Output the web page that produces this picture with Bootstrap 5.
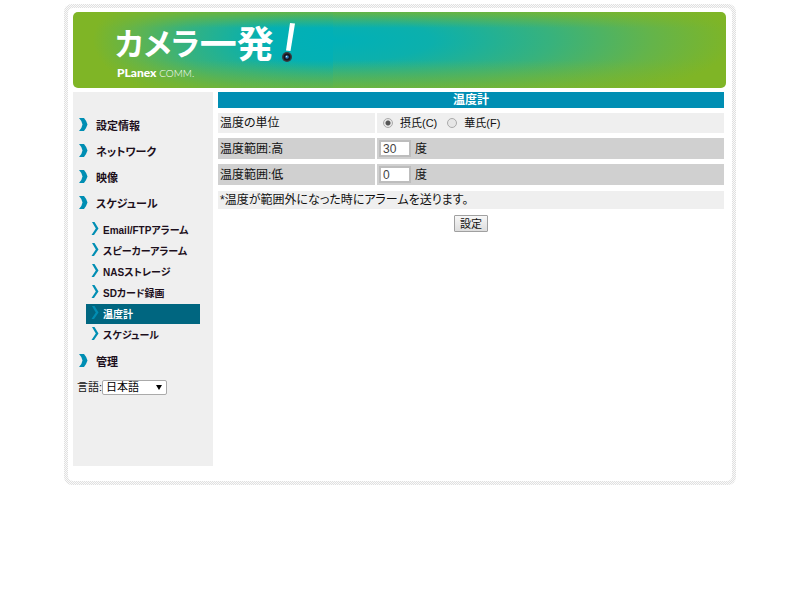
<!DOCTYPE html>
<html lang="ja">
<head>
<meta charset="utf-8">
<meta name="viewport" content="width=device-width, initial-scale=1">
<title>温度計</title>
<link rel="stylesheet" href="https://cdn.jsdelivr.net/npm/bootstrap@5.3.0/dist/css/bootstrap.min.css">
<style>
  body { font: 12px/16px "Liberation Sans", "Noto Sans CJK JP", sans-serif; font-feature-settings: "palt"; color: #111; background: #fff; }
  .frame { max-width: 672px; padding: 4px; border-radius: 8px; background: repeating-conic-gradient(#e0e0e0 0 25%, #fafafa 0 50%) 0 0 / 2px 2px; }
  .frame-inner { padding: 4px 6px 15px 5px; border-radius: 5px; background: #fff; }
  .banner { height: 76px; border-radius: 5px; color: #fff; padding: 5px 0 0 42px;
    background:
      linear-gradient(#7fb526bb 0, #7fb52600 16px, #7fb52600 48px, #7fb526aa 100%),
      radial-gradient(ellipse 240px 84px at 100% 28px, #00b0b8 0, #04b0b3 30%, #38b27c 64%, #64b44a 84%, #7fb526 100%) left / 260px 100% no-repeat,
      radial-gradient(ellipse 400px 84px at 0 28px, #00b0b8 0, #0cb0ac 25%, #38b27c 55%, #64b44a 80%, #7fb526 100%) 260px 0 / 100% 100% no-repeat; }
  .logo { font-family: "Noto Sans CJK JP", sans-serif; font-size: 37px; line-height: 50px; height: 50px; font-weight: 700; }
  .logo-kana { font-size: 31px; }
  .bang { width: 14px; height: 42px; margin: 4px 0 0 8px; }
  .maker { font: 300 10px/12px "Lato", sans-serif; padding-left: 2px; }
  .maker b { font-weight: 900; font-size: 12px; }
  .side { width: 140px; min-height: 374px; background: #efefef; padding: 21px 0 0; font-size: 11px; font-weight: 700; }
  .side a { color: #1d0f1c; text-decoration: none; }
  .top-link { height: 26px; padding-left: 6px; gap: 8px; }
  .sub-list { margin: 3px 13px 4px 13px; }
  .sub-link { height: 20px; margin-bottom: 1px; padding: 2px 0 0 5px; gap: 4px; font-size: 10px; }
  .side .sub-link.active { background: #006680; color: #fff; }
  .icon-cell { width: 9px; height: 13px; margin-top: -4px; fill: #008eb3; }
  .sub-link .icon-cell { width: 8px; margin-top: -6px; }
  .lang { padding: 4px 0 0 4px; }
  .lang select { width: 65px; height: 15px; font-size: 11px; line-height: 13px; padding: 0 3px; border: 1px solid #aaa; border-radius: 2px; appearance: none; background: #fff; }
  .lang-arrow { right: 5px; top: 5px; width: 6px; height: 5px; pointer-events: none; }
  .content { margin: 0 2px 0 5px; }
  .title-bar { background: #008eb3; color: #fff; font-size: 12px; line-height: 16px; font-weight: 700; }
  .settings { border-collapse: separate; border-spacing: 0; margin-top: 5px; }
  .settings th, .settings td { height: 26px; padding: 0 2px; border: 0 solid #fff; border-bottom-width: 5px; font-weight: 400; background: #d0d0d0; background-clip: padding-box; }
  .settings th { width: 159px; border-right-width: 2px; }
  .settings .pale > * { height: 25px; background-color: #efefef; }
  .settings input[type=text] { width: 32px; height: 17px; padding: 0 2px; border: 2px solid #bdbdbd; font: 12px/13px "Liberation Sans", sans-serif; color: #444; background: #fff; }
  .settings input[type=radio] { appearance: none; width: 10px; height: 10px; border: 1px solid #aaa; border-radius: 50%; background: #e6e6e6; }
  .settings input[type=radio]:checked { background: radial-gradient(circle, #555 0 2px, #e6e6e6 3px); }
  .choice { padding: 0 10px 0 7px; font-size: 11px; }
  .note { background: #efefef; padding: 0 2px; line-height: 18px; margin-top: 1px; }
  .send { width: 34px; height: 17px; padding: 0; font-size: 11px; line-height: 14px; border: 1px solid #a0a0a0; border-radius: 1px; background: linear-gradient(#f7f7f7, #ddd); color: #111; }
  .send-row { padding-top: 6px; line-height: 17px; }
</style>
<script src="https://cdn.jsdelivr.net/npm/bootstrap@5.3.0/dist/js/bootstrap.bundle.min.js"></script>
</head>
<body>
<svg class="d-none" aria-hidden="true">
  <symbol id="thick" viewBox="0 0 9 13"><path d="M0 0H5Q7 2 8.500 6.500Q7 11 5 13H0Q3 10 3.500 6.500Q3 3 0 0Z"/></symbol>
  <symbol id="thin" viewBox="0 0 8 13"><path d="M1 0H3.500L7.500 6.500L3 13H.5L4.800 6.500Z"/></symbol>
</svg>
<div class="frame mx-auto mt-1">
  <div class="frame-inner">
    <header class="banner">
      <div class="logo d-flex align-items-center"><span class="logo-kana">カメラ</span><span>一発</span>
        <svg class="bang" viewBox="0 0 14 42" role="img" aria-label="!"><path d="M8 0L13 .5L8.500 28L4 27.500Z" fill="#fff"/><circle cx="5" cy="34" r="5" fill="#39393f"/><circle cx="5" cy="34" r="3.500" fill="#16161c"/><circle cx="5" cy="34" r="1.800" fill="#287dbd"/><circle cx="4.500" cy="33.500" r=".7" fill="#bfe6ff"/></svg>
      </div>
      <div class="maker"><b>PLanex</b> COMM.</div>
    </header>
    <div class="d-flex mt-1">
      <nav class="side flex-shrink-0">
        <a href="#" class="top-link d-flex align-items-center"><svg class="icon-cell"><use href="#thick"/></svg>設定情報</a>
        <a href="#" class="top-link d-flex align-items-center"><svg class="icon-cell"><use href="#thick"/></svg>ネットワーク</a>
        <a href="#" class="top-link d-flex align-items-center"><svg class="icon-cell"><use href="#thick"/></svg>映像</a>
        <a href="#" class="top-link d-flex align-items-center"><svg class="icon-cell"><use href="#thick"/></svg>スケジュール</a>
        <div class="sub-list">
          <a href="#" class="sub-link d-flex align-items-center"><svg class="icon-cell"><use href="#thin"/></svg>Email/FTPアラーム</a>
          <a href="#" class="sub-link d-flex align-items-center"><svg class="icon-cell"><use href="#thin"/></svg>スピーカーアラーム</a>
          <a href="#" class="sub-link d-flex align-items-center"><svg class="icon-cell"><use href="#thin"/></svg>NASストレージ</a>
          <a href="#" class="sub-link d-flex align-items-center"><svg class="icon-cell"><use href="#thin"/></svg>SDカード録画</a>
          <a href="#" class="sub-link active d-flex align-items-center" aria-current="page"><svg class="icon-cell"><use href="#thin"/></svg>温度計</a>
          <a href="#" class="sub-link d-flex align-items-center"><svg class="icon-cell"><use href="#thin"/></svg>スケジュール</a>
        </div>
        <a href="#" class="top-link d-flex align-items-center"><svg class="icon-cell"><use href="#thick"/></svg>管理</a>
        <div class="lang d-flex align-items-center">
          <label for="lang" class="fw-normal">言語:</label>
          <div class="position-relative d-flex"><select id="lang"><option>日本語</option></select><svg class="lang-arrow position-absolute" viewBox="0 0 6 5" aria-hidden="true"><path d="M0 0H6L3 5Z"/></svg></div>
        </div>
      </nav>
      <main class="content flex-grow-1">
        <h1 class="title-bar text-center m-0">温度計</h1>
        <form>
          <table class="settings w-100">
            <tr class="pale"><th scope="row">温度の単位</th><td>
              <div class="d-flex align-items-center ps-1"><input type="radio" name="unit" id="c" checked><label for="c" class="choice">摂氏(C)</label><input type="radio" name="unit" id="f"><label for="f" class="choice">華氏(F)</label></div></td></tr>
            <tr><th scope="row"><label for="hi">温度範囲:高</label></th><td><div class="d-flex align-items-center gap-1"><input type="text" id="hi" value="30"><span>度</span></div></td></tr>
            <tr><th scope="row"><label for="lo">温度範囲:低</label></th><td><div class="d-flex align-items-center gap-1"><input type="text" id="lo" value="0"><span>度</span></div></td></tr>
          </table>
          <div class="note">*温度が範囲外になった時にアラームを送ります。</div>
          <div class="send-row d-flex justify-content-center"><button type="button" class="send">設定</button></div>
        </form>
      </main>
    </div>
  </div>
</div>
</body>
</html>
